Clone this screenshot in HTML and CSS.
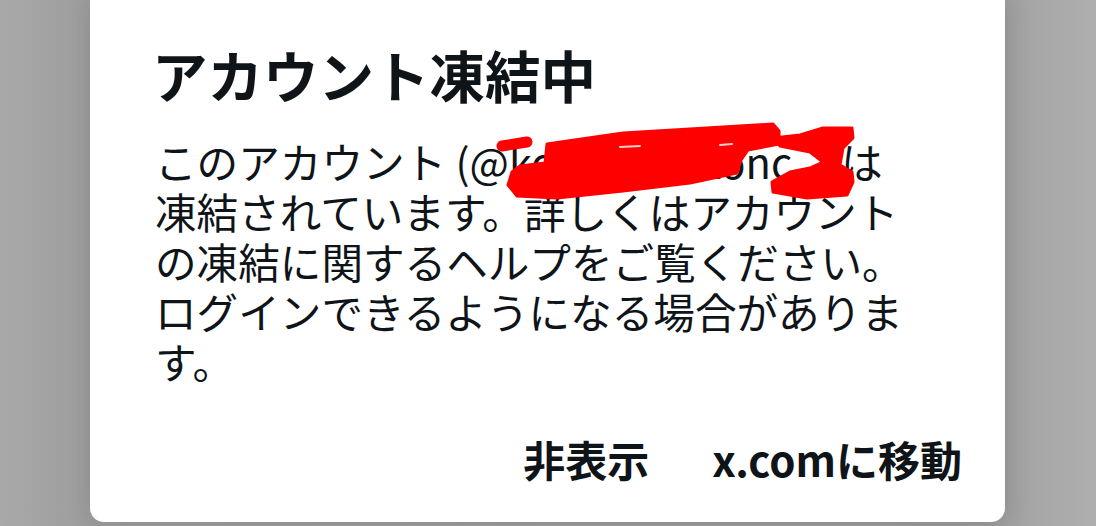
FILE: index.html
```html
<!DOCTYPE html>
<html lang="ja">
<head>
<meta charset="utf-8">
<link rel="stylesheet" href="styles.css">
</head>
<body>
<div class="dialog">
  <h1 class="title">アカウント凍結中</h1>
  <p class="message">このアカウント (@<span class="handle">koxxxxxxxxonc_x)</span>は凍結されています。詳しくはアカウントの凍結に関するヘルプをご覧ください。ログインできるようになる場合があります。</p>
  <svg class="scribble" width="380" height="90" viewBox="490 115 380 90" aria-hidden="true">
    <g fill="#ff0000" stroke="#ff0000" stroke-width="3" stroke-linejoin="round">
      <polygon points="547,144 623,133 690,129 773,124 779,131 779,144 748,150 741,160 737,173 690,183 623,191 557,198 517,196 508,185 512,172 520,166 545,163"/>
      <polygon points="773,138 800,135 823,128 852,128 853,138 843,148 840,165 852,172 853,182 847,195 807,198 773,192 772,182 790,172 810,168 823,162 810,152 780,146"/>
    </g>
    <path d="M502 146 L527 142" stroke="#ff0000" stroke-width="11" stroke-linecap="round"/>
    <path d="M620 147 L640 146 M720 145 L732 144" stroke="#ffffff" stroke-width="2" stroke-linecap="round" opacity="0.8"/>
  </svg>
  <div class="actions">
    <span class="action">非表示</span>
    <span class="action">x.comに移動</span>
  </div>
</div>
</body>
</html>
```

FILE: styles.css
```css
html, body {
  margin: 0;
  padding: 0;
}
body {
  width: 1096px;
  height: 526px;
  overflow: hidden;
  background: linear-gradient(to right, #a9a9a9 0%, #9d9d9d 8%, #9a9a9a 90%, #a8a8a8 95%, #aeaeae 100%);
  font-family: "Noto Sans CJK JP", "Noto Sans", sans-serif;
  color: #0f1419;
}
.dialog {
  position: relative;
  box-sizing: border-box;
  margin-left: 90px;
  width: 915px;
  height: 522px;
  background: #ffffff;
  border-radius: 0 0 14px 14px;
  padding: 47px 43px 0 65px;
  box-shadow: 0 0 24px rgba(0, 0, 0, 0.12);
}
.title {
  margin: 0 0 0 -3px;
  font-size: 55.5px;
  line-height: 55px;
  font-weight: 700;
}
.message {
  margin: 34px 0 0 0;
  width: 760px;
  font-size: 41.6px;
  line-height: 50px;
  font-weight: 400;
}
.handle {
  display: inline-block;
  width: 332px;
  overflow: hidden;
  white-space: nowrap;
  vertical-align: top;
}
.scribble {
  position: absolute;
  left: 400px;
  top: 115px;
}
.actions {
  display: flex;
  justify-content: flex-end;
  gap: 63px;
  margin-top: 52px;
}
.action {
  font-size: 42px;
  line-height: 42px;
  font-weight: 700;
}
```
